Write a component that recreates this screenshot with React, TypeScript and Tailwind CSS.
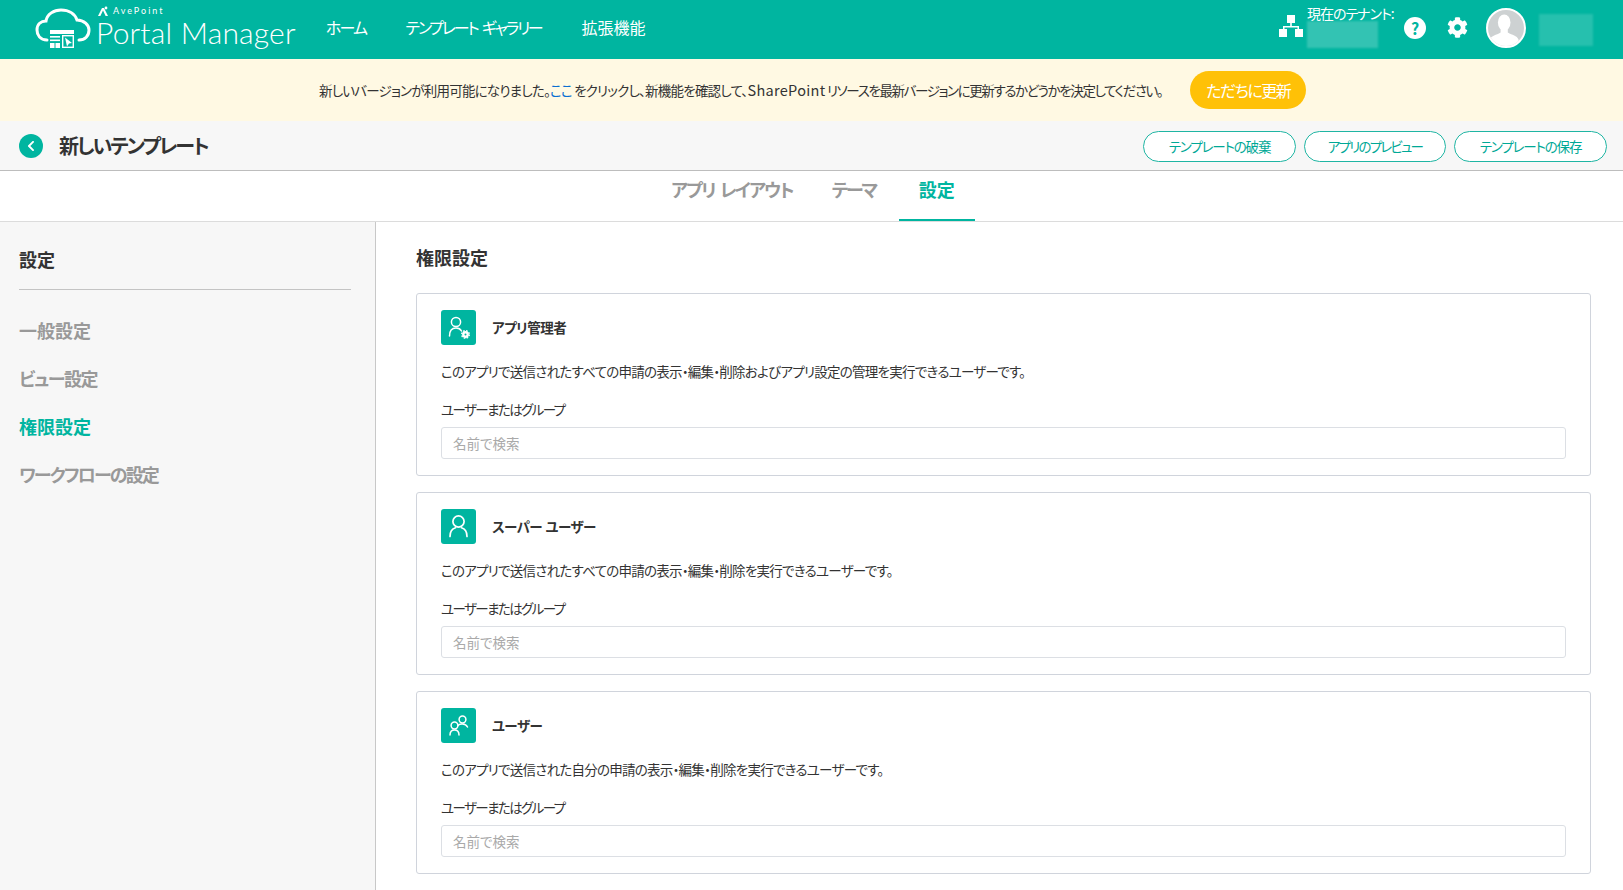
import React from "react";
import { FaCog, FaChevronLeft } from "react-icons/fa";

const font = "font-['Noto_Sans_CJK_JP','Noto_Sans',sans-serif] [font-feature-settings:'palt']";

const CloudLogo = () => (
  <svg width="58" height="44" viewBox="0 0 58 44" fill="none" className="shrink-0">
    <path
      d="M13 32 C6 32 3 27 3 22 C3 16 7 13 12 13 C13 6 20 2 27 2 C35 2 41 6 43 12 C50 12 55 17 55 22 C55 28 51 32 45 32"
      stroke="#fff"
      strokeWidth="3"
      strokeLinecap="round"
    />
    <rect x="16" y="22" width="24" height="4" fill="#fff" />
    <rect x="16" y="28" width="10" height="1.6" fill="#fff" />
    <rect x="16" y="31.5" width="10" height="1.6" fill="#fff" />
    <rect x="16" y="35" width="4.5" height="5" fill="#fff" />
    <rect x="21.5" y="35" width="4.5" height="5" fill="#fff" />
    <rect x="28.7" y="27.7" width="10.6" height="11.6" stroke="#fff" strokeWidth="1.4" />
    <path d="M31 29.5 L38 35 L35 35.5 L33 38.5 Z" fill="#fff" />
  </svg>
);

const AvePointMark = () => (
  <svg width="10" height="10" viewBox="0 0 10 10" fill="#fff" className="mr-[5px] shrink-0">
    <path d="M4 2 L6 2 L10 10 L7.6 10 L5 4.6 L2.4 10 L0 10 Z" />
    <circle cx="8" cy="2" r="1.4" />
  </svg>
);

const TenantIcon = () => (
  <svg width="24" height="24" viewBox="0 0 24 24" fill="#fff" className="mb-[8px] shrink-0">
    <rect x="8" y="1" width="8" height="8" />
    <rect x="0" y="15" width="8" height="8" />
    <rect x="16" y="15" width="8" height="8" />
    <path d="M11.2 9h1.6v3H20v3h-1.5v-1.5h-13V15H4v-3h7.2z" />
  </svg>
);

const HelpIcon = () => (
  <div className="flex h-[22px] w-[22px] items-center justify-center rounded-full bg-white text-[16px] font-bold leading-none text-[#00b5a0]">
    ?
  </div>
);

const Avatar = () => (
  <div className="h-10 w-10 overflow-hidden rounded-full border-2 border-white bg-[#cdd1d2]">
    <svg viewBox="0 0 40 40" fill="#fff" className="h-full w-full">
      <ellipse cx="18" cy="14" rx="7" ry="9" />
      <path d="M14 21 L14 25 C9 28 4 28 2 33 L2 40 L34 40 L34 33 C32 28 27 28 22 25 L22 21 Z" />
    </svg>
  </div>
);

const AdminIcon = () => (
  <svg width="35" height="35" viewBox="0 0 35 35" fill="none" stroke="#fff" strokeWidth="1.5">
    <circle cx="15" cy="12" r="4.6" />
    <path d="M8.5 26 C8.5 20.5 11 18 15 18 C17.5 18 19.5 19 20.5 21" strokeLinecap="round" />
    <circle cx="24.5" cy="24.5" r="2.2" strokeWidth="2.4" />
    <circle cx="24.5" cy="24.5" r="3.8" strokeWidth="1.4" strokeDasharray="1.6 1.4" />
  </svg>
);

const SuperIcon = () => (
  <svg width="35" height="35" viewBox="0 0 35 35" fill="none" stroke="#fff" strokeWidth="1.7">
    <circle cx="17.5" cy="12.5" r="5.6" />
    <path d="M9 27.5 C9 22 12 19.5 14.5 18.8 M26 27.5 C26 22 23 19.5 20.5 18.8" strokeLinecap="round" />
  </svg>
);

const UsersIcon = () => (
  <svg width="35" height="35" viewBox="0 0 35 35" fill="none" stroke="#fff" strokeWidth="1.5">
    <circle cx="21.5" cy="11.5" r="3.4" />
    <path d="M17 17.5 C18.5 15.5 24.5 15 26.5 19" strokeLinecap="round" />
    <circle cx="13.5" cy="17.5" r="3.4" />
    <path d="M9 27 C9 23.5 11 22 13.5 22 C16 22 18 23.5 18 27" strokeLinecap="round" />
  </svg>
);

const PermissionCard = ({ icon, title, desc }: { icon: React.ReactNode; title: string; desc: string }) => (
  <section className="h-[183px] rounded-[3px] border border-[#d0d4dc] bg-white px-6 pt-4">
    <div className="flex items-center gap-[16px]">
      <div className="flex h-[35px] w-[35px] items-center justify-center rounded-[3px] bg-[#00b5a0]">{icon}</div>
      <h3 className="text-[13.5px] font-bold tracking-[-0.5px] [word-spacing:1px] text-[#333]">{title}</h3>
    </div>
    <p className="mt-[16px] text-[13.5px] leading-5 tracking-[-0.74px] text-[#333]">{desc}</p>
    <p className="mt-[18px] text-[13.5px] leading-5 tracking-[-1.6px] text-[#333]">ユーザーまたはグループ</p>
    <input
      placeholder="名前で検索"
      className="mt-[8px] h-[32px] w-full rounded-[3px] border border-[#dcdfe4] px-[11px] text-[13.5px] placeholder:text-[#a9a9a9]"
    />
  </section>
);

const HeaderBtn = ({ label, w }: { label: string; w: string }) => (
  <button className={`h-[31px] ${w} rounded-full border border-[#1fb5a3] bg-white text-[13.5px] text-[#00a896]`}>
    {label}
  </button>
);

export default function App() {
  return (
    <div className={`flex h-[890px] w-[1623px] flex-col overflow-hidden bg-white ${font}`}>
      {/* Top bar */}
      <header className="flex h-[59px] shrink-0 items-center bg-[#00b5a0] text-white">
        <div className="ml-[34px] flex items-center">
          <CloudLogo />
          <div className="ml-[4px] mt-[-8px] font-['Lato',sans-serif]">
            <div className="flex h-[13px] items-center pl-[2px] text-[9px] leading-none tracking-[2px]">
              <AvePointMark />AvePoint
            </div>
            <div className="text-[30px] font-light leading-[30px] tracking-[0.2px]">Portal Manager</div>
          </div>
        </div>
        <nav className="ml-[30px] mt-[-5px] flex items-center text-[16px]">
          <span className="tracking-[-1.7px]">ホーム</span>
          <span className="ml-[39px] tracking-[-2.2px] [word-spacing:3px]">テンプレート ギャラリー</span>
          <span className="ml-[40px]">拡張機能</span>
        </nav>
        <div className="ml-auto flex items-center">
          <TenantIcon />
          <div className="ml-[4px] mb-[5px] w-[98px]">
            <div className="whitespace-nowrap text-[14px] leading-[14px] tracking-[-1px]">現在のテナント:</div>
            <div className="mt-[1px] h-[27px] w-[71px] bg-white/20 blur-[1px]" />
          </div>
          <div className="ml-[-1px] mt-[-3px]"><HelpIcon /></div>
          <FaCog className="ml-[21px] mb-[5px] text-[21px]" />
          <div className="ml-[18px] mb-[4px]"><Avatar /></div>
          <div className="ml-[13px] mr-[30px] h-[32px] w-[54px] bg-white/15 blur-[1px]" />
        </div>
      </header>

      {/* Update banner */}
      <div className="flex h-[62px] shrink-0 items-center bg-[#fff9e3] pl-[319px]">
        <p className="text-[13.5px] tracking-[-0.79px] text-[#333]">
          新しいバージョンが利用可能になりました。<span className="text-[#0b6fd1]">ここ</span> をクリックし、新機能を確認して、
          <span className="text-[14.5px] tracking-[0.3px]">SharePoint</span>
          <span className="tracking-[-1.4px]"> リソースを最新バージョンに更新するかどうかを決定してください。</span>
        </p>
        <button className="ml-[28px] h-[38px] w-[116px] rounded-full bg-[#ffc107] text-[16px] tracking-[-1.5px] text-white">
          ただちに更新
        </button>
      </div>

      {/* Title row */}
      <div className="flex h-[50px] shrink-0 items-center justify-between border-b border-[#bdbdbd] bg-[#f7f7f7] pl-[19px] pr-[16px]">
        <div className="flex items-center gap-[16px]">
          <div className="flex h-[24px] w-[24px] items-center justify-center rounded-full bg-[#00b5a0] text-white">
            <FaChevronLeft className="text-[12px]" />
          </div>
          <h1 className="text-[20px] font-bold tracking-[-2px] text-[#333]">新しいテンプレート</h1>
        </div>
        <div className="mt-[2px] flex items-center gap-[8px]">
          <HeaderBtn label="テンプレートの破棄" w="w-[153px] tracking-[-1.15px]" />
          <HeaderBtn label="アプリのプレビュー" w="w-[142px] tracking-[-1.8px]" />
          <HeaderBtn label="テンプレートの保存" w="w-[153px] tracking-[-1.15px]" />
        </div>
      </div>

      {/* Tabs */}
      <div className="flex h-[51px] shrink-0 justify-center border-b border-[#dcdcdc] pl-[3px]">
        <div className="flex text-[18px] font-bold text-[#999]">
          <div className="px-[20px] pt-[5px] tracking-[-1.8px] [word-spacing:3px]">アプリ レイアウト</div>
          <div className="pl-[19px] pr-[23px] pt-[5px] tracking-[-2.2px]">テーマ</div>
          <div className="w-[76px] border-b-2 border-[#00b5a0] pt-[5px] text-center text-[#00b5a0]">設定</div>
        </div>
      </div>

      <div className="flex min-h-0 flex-1">
        {/* Sidebar */}
        <aside className="w-[376px] shrink-0 border-r border-[#c8c8c8] bg-[#f7f7f7] pl-[19px] pr-[24px] pt-[25px]">
          <h2 className="border-b border-[#c4c4c4] pb-[18px] text-[18px] font-bold leading-6 text-[#333]">設定</h2>
          <ul className="mt-[16px] text-[18px] font-bold text-[#999]">
            <li className="flex h-[48px] items-center">一般設定</li>
            <li className="flex h-[48px] items-center tracking-[-1.45px]">ビュー設定</li>
            <li className="flex h-[48px] items-center text-[#00b5a0]">権限設定</li>
            <li className="flex h-[48px] items-center tracking-[-1.85px]">ワークフローの設定</li>
          </ul>
        </aside>

        {/* Main */}
        <main className="flex-1 pl-[40px] pr-[32px] pt-[23px]">
          <h2 className="text-[18px] font-bold leading-6 text-[#333]">権限設定</h2>
          <div className="mt-[24px] flex flex-col gap-[16px]">
            <PermissionCard
              icon={<AdminIcon />}
              title="アプリ管理者"
              desc="このアプリで送信されたすべての申請の表示・編集・削除およびアプリ設定の管理を実行できるユーザーです。"
            />
            <PermissionCard
              icon={<SuperIcon />}
              title="スーパー ユーザー"
              desc="このアプリで送信されたすべての申請の表示・編集・削除を実行できるユーザーです。"
            />
            <PermissionCard
              icon={<UsersIcon />}
              title="ユーザー"
              desc="このアプリで送信された自分の申請の表示・編集・削除を実行できるユーザーです。"
            />
          </div>
        </main>
      </div>
    </div>
  );
}
